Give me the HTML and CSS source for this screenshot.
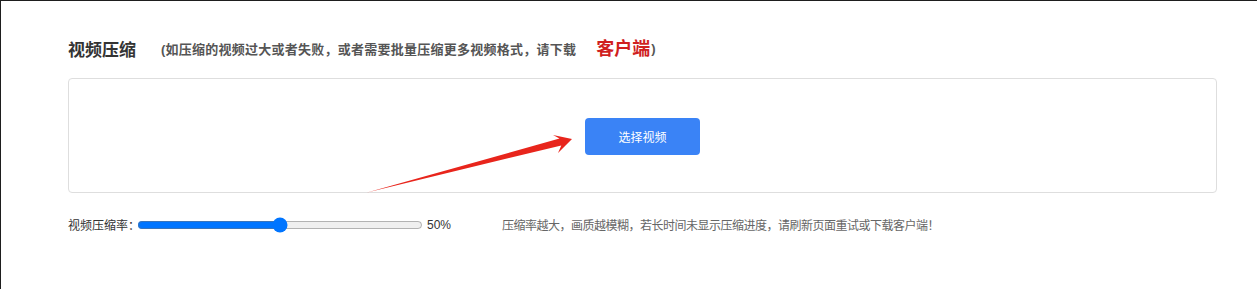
FILE: index.html
```html
<!DOCTYPE html>
<html lang="zh-CN">
<head>
    <meta charset="UTF-8">
    <meta name="viewport" content="width=device-width, initial-scale=1.0">
    <title>视频压缩</title>
    <link rel="stylesheet" href="styles.css">
</head>
<body>
    <div class="page">
        <div class="title-row">
            <h1>视频压缩</h1>
            <p class="tip">(如压缩的视频过大或者失败，或者需要批量压缩更多视频格式，请下载<a href="#" class="client">客户端</a>)</p>
        </div>

        <div class="upload-box">
            <button class="select-btn">选择视频</button>
            <svg class="arrow" viewBox="0 0 1149 115" preserveAspectRatio="none">
                <polygon points="299,114.5 493.3,67.4 490,75 504,61 485,57 491.5,60.6" fill="#e8251c"/>
            </svg>
        </div>

        <div class="rate-row">
            <label for="rate">视频压缩率：</label>
            <input type="range" id="rate" min="0" max="100" value="50">
            <span class="rate-value">50%</span>
            <span class="hint">压缩率越大，画质越模糊，若长时间未显示压缩进度，请刷新页面重试或下载客户端！</span>
        </div>
    </div>
</body>
</html>
```

FILE: styles.css
```css
html, body {
    margin: 0;
    padding: 0;
    background: #fff;
}
body {
    font-family: "Liberation Sans", "Noto Sans CJK SC", sans-serif;
    color: #333;
    height: 289px;
    box-sizing: border-box;
    border-top: 1px solid #1e1e1e;
    border-left: 1px solid #1e1e1e;
}
.page {
    padding: 0 40px 0 67px;
}
.title-row {
    display: flex;
    align-items: center;
    height: 36px;
    margin-top: 29px;
}
h1 {
    font-size: 17px;
    font-weight: bold;
    color: #333;
    margin: 0 25px 0 0;
}
.tip {
    margin: 0;
    font-size: 13px;
    font-weight: bold;
    color: #555;
    letter-spacing: 0.25px;
    display: flex;
    align-items: center;
}
.client {
    color: #d01f1f;
    font-size: 18px;
    font-weight: bold;
    letter-spacing: 0;
    text-decoration: none;
    margin: 0 1px 2px 20px;
}
.upload-box {
    position: relative;
    margin-top: 12px;
    height: 113px;
    border: 1px solid #dedede;
    border-radius: 4px;
    display: flex;
    justify-content: center;
    align-items: center;
}
.select-btn {
    width: 115px;
    height: 37px;
    margin-top: 2px;
    border: none;
    border-radius: 4px;
    background-color: #3a83f6;
    color: #fff;
    font-family: inherit;
    font-size: 12px;
    cursor: pointer;
}
.arrow {
    position: absolute;
    left: -1px;
    top: -1px;
    width: 1149px;
    height: 115px;
    overflow: visible;
    pointer-events: none;
}
.rate-row {
    display: flex;
    align-items: center;
    margin-top: 23px;
    font-size: 12px;
    color: #333;
}
.rate-row label {
    width: 69px;
    white-space: nowrap;
}
.rate-row input[type=range] {
    width: 286px;
    margin: 0;
}
.rate-value {
    margin-left: 4px;
    width: 75px;
}
.hint {
    color: #666;
    letter-spacing: -0.5px;
    white-space: nowrap;
}
```
